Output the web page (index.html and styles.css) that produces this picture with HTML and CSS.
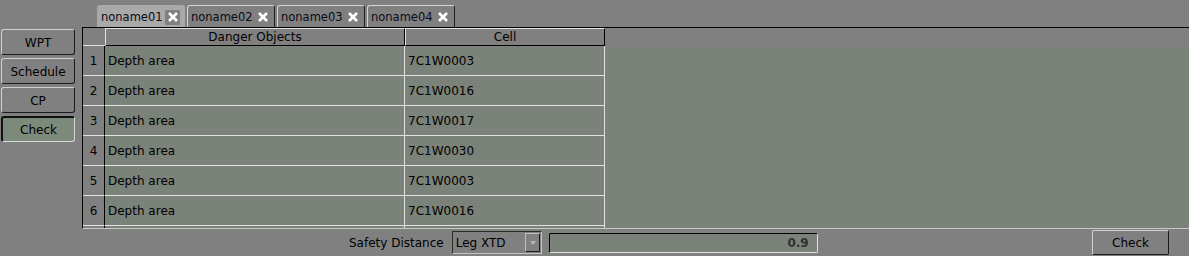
FILE: index.html
```html
<!DOCTYPE html>
<html lang="en">
<head>
    <meta charset="UTF-8">
    <title>Route Check</title>
    <link rel="stylesheet" href="styles.css">
</head>
<body>
    <div class="tabs">
        <div class="tab active"><span class="tab-name">noname01</span><span class="tab-close"><svg width="10" height="10" viewBox="0 0 10 10"><path d="M1 1L9 9M9 1L1 9" stroke="#fff" stroke-width="2.6"/></svg></span></div>
        <div class="tab"><span class="tab-name">noname02</span><span class="tab-close"><svg width="10" height="10" viewBox="0 0 10 10"><path d="M1 1L9 9M9 1L1 9" stroke="#fff" stroke-width="2.6"/></svg></span></div>
        <div class="tab"><span class="tab-name">noname03</span><span class="tab-close"><svg width="10" height="10" viewBox="0 0 10 10"><path d="M1 1L9 9M9 1L1 9" stroke="#fff" stroke-width="2.6"/></svg></span></div>
        <div class="tab"><span class="tab-name">noname04</span><span class="tab-close"><svg width="10" height="10" viewBox="0 0 10 10"><path d="M1 1L9 9M9 1L1 9" stroke="#fff" stroke-width="2.6"/></svg></span></div>
    </div>

    <div class="main">
        <div class="side">
            <button class="side-btn">WPT</button>
            <button class="side-btn">Schedule</button>
            <button class="side-btn">CP</button>
            <button class="side-btn pressed">Check</button>
        </div>

        <div class="panel">
            <div class="grid-head">
                <div class="num-head"></div>
                <div class="head-cell col-obj">Danger Objects</div>
                <div class="head-cell col-cell">Cell</div>
            </div>
            <div class="grid-body">
                <div class="row"><div class="num">1</div><div class="cell col-obj">Depth area</div><div class="cell col-cell">7C1W0003</div></div>
                <div class="row"><div class="num">2</div><div class="cell col-obj">Depth area</div><div class="cell col-cell">7C1W0016</div></div>
                <div class="row"><div class="num">3</div><div class="cell col-obj">Depth area</div><div class="cell col-cell">7C1W0017</div></div>
                <div class="row"><div class="num">4</div><div class="cell col-obj">Depth area</div><div class="cell col-cell">7C1W0030</div></div>
                <div class="row"><div class="num">5</div><div class="cell col-obj">Depth area</div><div class="cell col-cell">7C1W0003</div></div>
                <div class="row"><div class="num">6</div><div class="cell col-obj">Depth area</div><div class="cell col-cell">7C1W0016</div></div>
                <div class="row"><div class="num"></div><div class="cell col-obj"></div><div class="cell col-cell"></div></div>
            </div>
        </div>
    </div>

    <div class="footer">
        <label class="field-label">Safety Distance</label>
        <div class="select">
            <span>Leg XTD</span>
            <span class="select-arrow"></span>
        </div>
        <div class="value-box">0.9</div>
        <button class="check-btn">Check</button>
    </div>
</body>
</html>
```

FILE: styles.css
```css
body {
    margin: 0;
    background-color: #808080;
    font-family: "DejaVu Sans", Verdana, sans-serif;
    font-size: 12px;
    color: #000;
    width: 1189px;
    height: 256px;
    overflow: hidden;
}
button {
    font-family: inherit;
    font-size: 12px;
    color: #000;
    cursor: pointer;
}

/* tab strip */
.tabs {
    height: 27px;
    display: flex;
    align-items: flex-end;
    gap: 2px;
    padding-left: 97px;
    box-sizing: border-box;
}
.tab {
    width: 88px;
    height: 22px;
    box-sizing: border-box;
    display: flex;
    align-items: center;
    justify-content: space-between;
    padding: 0 4px 0 3px;
    border-top: 1px solid #d4d4d4;
    border-left: 1px solid #d4d4d4;
    border-right: 1px solid #202020;
    border-radius: 3px 3px 0 0;
    color: #0a0a1a;
    font-size: 11.5px;
}
.tab.active {
    background-color: #a9a9a9;
    border-color: #a9a9a9;
}
.tab-close {
    width: 15px;
    height: 15px;
    display: flex;
    align-items: center;
    justify-content: center;
    margin-top: 1px;
}
.tab.active .tab-close {
    background-color: #808080;
}

/* main area */
.main {
    display: flex;
    height: 202px;
}
.side {
    width: 82px;
    display: flex;
    flex-direction: column;
    gap: 3px;
    padding: 2px 0 0 1px;
    box-sizing: border-box;
}
.side-btn {
    width: 74px;
    height: 26px;
    background-color: #808080;
    border: 1px solid;
    border-color: #d0d0d0 #1a1a1a #1a1a1a #d0d0d0;
    border-radius: 3px;
    padding: 1px 0 0;
}
.side-btn.pressed {
    background-color: #7b8a7a;
    border-color: #101010 #d8d8d8 #d8d8d8 #101010;
    border-width: 2px 1px 1px 2px;
}

.panel {
    flex: 1;
    border-top: 1px solid #000;
    border-left: 1px solid #000;
    border-bottom: 1px solid #c8c8c8;
    background-color: #7a8279;
    display: flex;
    flex-direction: column;
    overflow: hidden;
}
.grid-head {
    height: 18px;
    display: flex;
    background-color: #808080;
    flex-shrink: 0;
}
.num-head {
    width: 22px;
    box-sizing: border-box;
    border-bottom: 1px solid #e2e2e2;
}
.head-cell {
    box-sizing: border-box;
    border: 1px solid;
    border-color: #e2e2e2 #000 #000 #e2e2e2;
    text-align: center;
    line-height: 16px;
}
.col-obj {
    width: 300px;
}
.col-cell {
    width: 200px;
}
.grid-body {
    flex: 1;
    overflow: hidden;
}
.row {
    display: flex;
    height: 30px;
}
.num {
    width: 22px;
    box-sizing: border-box;
    background-color: #808080;
    border-right: 1px solid #000;
    border-bottom: 1px solid #e2e2e2;
    text-align: center;
    padding-top: 1px;
    line-height: 28px;
}
.cell {
    box-sizing: border-box;
    border-right: 1px solid #e2e2e2;
    border-bottom: 1px solid #e2e2e2;
    padding: 1px 0 0 3px;
    line-height: 28px;
}

/* footer */
.footer {
    height: 27px;
    display: flex;
    align-items: center;
    padding-left: 349px;
}
.field-label {
    margin-right: 8px;
    color: #000;
}
.select {
    width: 90px;
    height: 23px;
    box-sizing: border-box;
    border: 1px solid;
    border-color: #2a2a2a #c4c4c4 #c4c4c4 #2a2a2a;
    display: flex;
    align-items: center;
    justify-content: space-between;
    padding: 0 1px 0 3px;
}
.select-arrow {
    width: 15px;
    height: 19px;
    box-sizing: border-box;
    border: 1px solid;
    border-color: #c0c0c0 #202020 #202020 #c0c0c0;
    position: relative;
}
.select-arrow::after {
    content: "";
    position: absolute;
    left: 4px;
    top: 7px;
    border-left: 3px solid transparent;
    border-right: 3px solid transparent;
    border-top: 4px solid #b4b4b4;
}
.value-box {
    width: 269px;
    height: 20px;
    margin-left: 7px;
    box-sizing: border-box;
    background-color: #7a8279;
    border: 1px solid;
    border-color: #000 #e0e0e0 #e0e0e0 #000;
    border-radius: 2px;
    text-align: right;
    padding-right: 8px;
    line-height: 18px;
    color: #303030;
    font-weight: bold;
}
.check-btn {
    margin-left: auto;
    margin-right: 20px;
    width: 77px;
    height: 25px;
    background-color: #808080;
    border: 1px solid;
    border-color: #d0d0d0 #1a1a1a #1a1a1a #d0d0d0;
    border-radius: 2px;
    padding: 0;
}
```
